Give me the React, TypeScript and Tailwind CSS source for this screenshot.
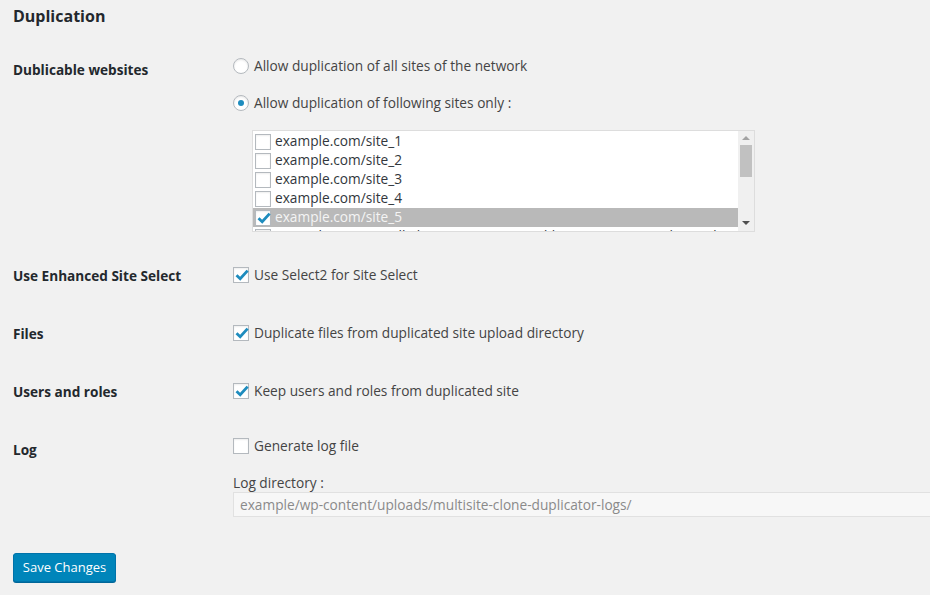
import { useState } from "react";

const FONT = "font-['Open_Sans','Noto_Sans',sans-serif]";

const CheckMark = () => (
  <svg viewBox="0 0 16 16" className="absolute left-[0px] top-[-1px] h-[16px] w-[16px]">
    <path d="M2.5 8.3 L6.2 11.8 L13.6 3.6" fill="none" stroke="#1e8cbe" strokeWidth="2.8" strokeLinejoin="miter" />
  </svg>
);

const Box = ({ checked }: { checked: boolean }) => (
  <span className="relative inline-block h-[16px] w-[16px] shrink-0 border border-[#b4b9be] bg-white shadow-[inset_0_1px_2px_rgba(0,0,0,0.07)]">
    {checked && <CheckMark />}
  </span>
);

const Radio = ({ checked }: { checked: boolean }) => (
  <span className="flex h-[16px] w-[16px] shrink-0 items-center justify-center rounded-full border border-[#b4b9be] bg-white shadow-[inset_0_1px_2px_rgba(0,0,0,0.1)]">
    {checked && <span className="h-[6px] w-[6px] rounded-full bg-[#1e8cbe]" />}
  </span>
);

const sites = [
  "example.com/site_1",
  "example.com/site_2",
  "example.com/site_3",
  "example.com/site_4",
  "example.com/site_5",
  "example.com/a-really-long-site-name-used-by-a-customer-multisite-demo-network",
];

const Label = ({ children, mt }: { children: React.ReactNode; mt: string }) => (
  <div className={`w-[220px] shrink-0 text-[13.6px] leading-[20px] font-bold text-[#23282d] ${mt}`}>{children}</div>
);

export default function App() {
  const [selected] = useState(4);

  return (
    <div className={`min-h-[595px] w-[930px] overflow-hidden bg-[#f1f1f1] pl-[13px] text-[13.7px] text-[#444] ${FONT}`}>
      <h2 className="pt-[6px] text-[16px] leading-[20px] font-bold text-[#23282d]">Duplication</h2>

      {/* Dublicable websites */}
      <div className="mt-[30px] flex">
        <Label mt="mt-[4px]">Dublicable websites</Label>
        <div className="flex flex-col">
          <label className="flex h-[20px] items-center gap-[5px]">
            <Radio checked={false} />
            <span>Allow duplication of all sites of the network</span>
          </label>
          <label className="mt-[17px] flex h-[20px] items-center gap-[5px]">
            <Radio checked />
            <span>Allow duplication of following sites only :</span>
          </label>
          <div className="mt-[17px] ml-[19px] flex h-[102px] w-[503px] border border-[#dddddd] bg-white">
            <ul className="flex-1 overflow-hidden pt-[1px]">
              {sites.map((s, i) => (
                <li
                  key={s}
                  className={`flex h-[19px] items-center gap-[4px] pl-[2px] whitespace-nowrap ${
                    i === selected ? "bg-[#b9b9b9] text-[#f4f4f4]" : "text-[#32373c]"
                  }`}
                >
                  <Box checked={i === selected} />
                  <span>{s}</span>
                </li>
              ))}
            </ul>
            <div className="flex w-[16px] flex-col items-center bg-[#f0f0f0]">
              <span className="mt-[5px] h-0 w-0 border-x-[4px] border-b-[4px] border-x-transparent border-b-[#a3a3a3]" />
              <span className="mt-[5px] h-[32px] w-[12px] bg-[#c1c1c1]" />
              <span className="mt-auto mb-[6px] h-0 w-0 border-x-[4px] border-t-[4px] border-x-transparent border-t-[#505050]" />
            </div>
          </div>
        </div>
      </div>

      {/* Use Enhanced Site Select */}
      <div className="mt-[33px] flex">
        <Label mt="mt-[1px]">Use Enhanced Site Select</Label>
        <label className="flex h-[20px] items-center gap-[5px]">
          <Box checked />
          <span>Use Select2 for Site Select</span>
        </label>
      </div>

      {/* Files */}
      <div className="mt-[37px] flex">
        <Label mt="mt-[1px]">Files</Label>
        <label className="flex h-[20px] items-center gap-[5px]">
          <Box checked />
          <span>Duplicate files from duplicated site upload directory</span>
        </label>
      </div>

      {/* Users and roles */}
      <div className="mt-[37px] flex">
        <Label mt="mt-[1px]">Users and roles</Label>
        <label className="flex h-[20px] items-center gap-[5px]">
          <Box checked />
          <span>Keep users and roles from duplicated site</span>
        </label>
      </div>

      {/* Log */}
      <div className="mt-[34px] flex">
        <Label mt="mt-[4px]">Log</Label>
        <div className="flex flex-1 flex-col">
          <label className="flex h-[20px] items-center gap-[5px]">
            <Box checked={false} />
            <span>Generate log file</span>
          </label>
          <div className="mt-[18px] h-[18px] leading-[18px]">Log directory :</div>
          <input
            readOnly
            value="example/wp-content/uploads/multisite-clone-duplicator-logs/"
            className="h-[25px] w-[720px] border border-[#e1e1e1] bg-[#f7f7f7] px-[6px] text-[13.7px] text-[#8a8a8a] outline-none"
          />
        </div>
      </div>

      <button className="mt-[36px] h-[29px] w-[103px] rounded-[3px] border border-[#0073aa] bg-[#0085ba] text-[13px] text-white shadow-[0_1px_0_#006799]">
        Save Changes
      </button>
    </div>
  );
}
